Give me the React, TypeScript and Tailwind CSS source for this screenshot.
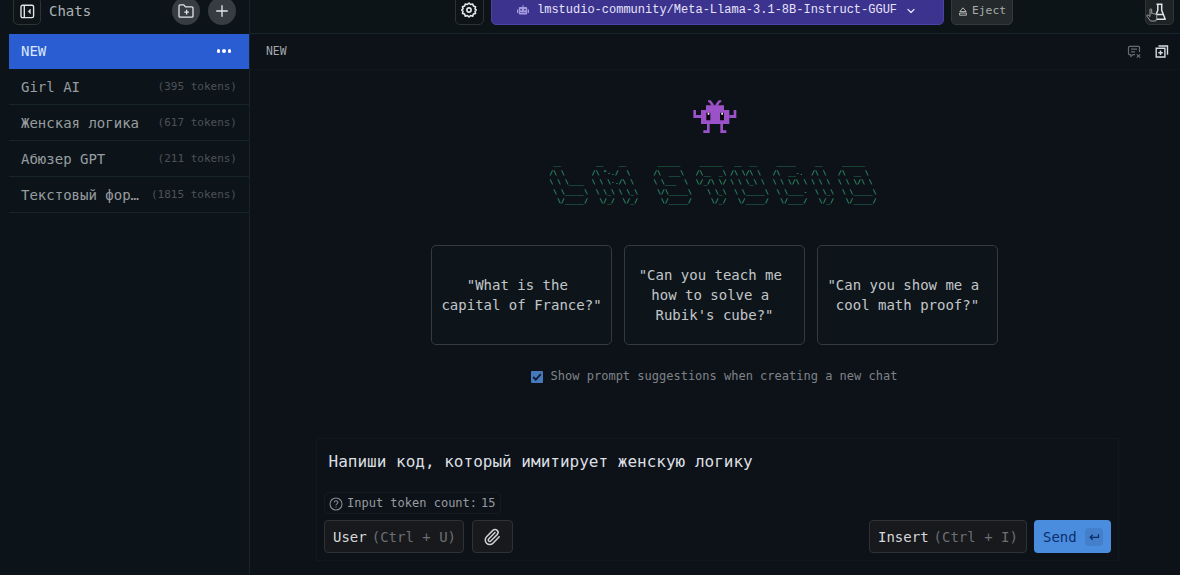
import { ReactNode } from 'react';
import { ChevronDown, Paperclip, Plus } from 'lucide-react';

interface Chat {
  title: string;
  tokens: number;
}

const chats: Chat[] = [
  { title: 'Girl AI', tokens: 395 },
  { title: 'Женская логика', tokens: 617 },
  { title: 'Абюзер GPT', tokens: 211 },
  { title: 'Текстовый фор…', tokens: 1815 },
];

// Wrapped lines keep their trailing space
const suggestions = [
  ['"What is the ', 'capital of France?"'],
  ['"Can you teach me ', 'how to solve a ', 'Rubik\'s cube?"'],
  ['"Can you show me a ', 'cool math proof?"'],
];

// Each letter is five rows, padded to its own column width
const letters: { width: number; rows: string[] }[] = [
  { width: 11, rows: [' __', '/\\ \\', '\\ \\ \\____', ' \\ \\_____\\', '  \\/_____/'] },
  { width: 16, rows: [' __    __', '/\\ "-./  \\', '\\ \\ \\-./\\ \\', ' \\ \\_\\ \\ \\_\\', '  \\/_/  \\/_/'] },
  { width: 11, rows: [' ______', '/\\  ___\\', '\\ \\___  \\', ' \\/\\_____\\', '  \\/_____/'] },
  { width: 9, rows: [' ______', '/\\__  _\\', '\\/_/\\ \\/', '   \\ \\_\\', '    \\/_/'] },
  { width: 11, rows: [' __  __', '/\\ \\/\\ \\', '\\ \\ \\_\\ \\', ' \\ \\_____\\', '  \\/_____/'] },
  { width: 10, rows: [' _____', '/\\  __-.', '\\ \\ \\/\\ \\', ' \\ \\____-', '  \\/____/'] },
  { width: 7, rows: [' __', '/\\ \\', '\\ \\ \\', ' \\ \\_\\', '  \\/_/'] },
  { width: 11, rows: [' ______', '/\\  __ \\', '\\ \\ \\/\\ \\', ' \\ \\_____\\', '  \\/_____/'] },
];

const logo = [0, 1, 2, 3, 4]
  .map((row) => letters.map((l) => l.rows[row].padEnd(l.width)).join(''))
  .join('\n');

function Robot() {
  return (
    <svg width="44" height="34" viewBox="0 0 132 102">
      <g fill="#9b51c7">
        <path d="M45 1h8l4 5 4 5 3 6h-9l-4-7-6-5zM85 1h-8l-4 5-4 5-3 6h9l4-7 6-5z" />
        <path d="M39 16h54v14h16v42H24V30h15z" />
        <path d="M1 30h8v15h15v9H1zM130 30h-8v15h-13v9h21z" />
        <path d="M42 72h8v27H31v-8h11zM82 72h8v19h10v8H82z" />
      </g>
      <path fill="#08070d" d="M40 38h12v23H40zM81 38h12v23H81z" />
      <path fill="#f4ecff" d="M44 38h5v6h-5zM85 38h5v6h-5z" />
    </svg>
  );
}

function PanelIcon() {
  return (
    <svg width="15" height="15" viewBox="0 0 15 15" fill="none" stroke="#dfe3e6" strokeWidth="1.4">
      <rect x="1" y="1.2" width="12.6" height="12.4" rx="1.6" />
      <path d="M4.300 1.2v12.4" />
      <path d="M10.400 5 8.2 7.4l2.200 2.4z" fill="#dfe3e6" strokeWidth="0.5" />
    </svg>
  );
}

function FolderPlusIcon() {
  return (
    <svg width="16" height="16" viewBox="0 0 16 16" fill="none" stroke="#e2e5e8" strokeWidth="1.3" strokeLinejoin="round">
      <path d="M1 3a1.2 1.2 0 0 1 1.2-1.2h3.6l1.7 2h6.3A1.2 1.2 0 0 1 15 5v8a1.2 1.2 0 0 1-1.2 1.2H2.2A1.2 1.2 0 0 1 1 13z" />
      <path d="M8.6 6.8v4.600M6.300 9.100h4.600" />
    </svg>
  );
}

function GearIcon() {
  return (
    <svg width="16" height="16" viewBox="0 0 16 16" fill="none" stroke="#e4e6e8" strokeWidth="1.6" strokeLinejoin="round">
      <path d="m8 1 1.600 1.500 2.100-.5.7 2.100 2.100.7-.5 2L15.300 8 14 9.400l.5 2-2.100.7-.7 2.100-2.100-.6L8 15l-1.600-1.400-2.100.6-.7-2.100-2.100-.7.5-2L.7 8 2 6.800l-.5-2 2.100-.7L4.300 2l2.100.5z" />
      <circle cx="8" cy="8" r="2.1" />
    </svg>
  );
}

function BotIcon() {
  return (
    <svg width="12" height="10" viewBox="0 0 12 10" fill="#a59ade">
      <path d="M5.500 0h1v2h2.700a1 1 0 0 1 1 1v5.500a1 1 0 0 1-1 1H2.800a1 1 0 0 1-1-1V3a1 1 0 0 1 1-1h2.700zM0 4.500h1.200v3.500H0zM10.800 4.500H12v3.500h-1.200z" />
      <path fill="#3b338e" d="M3.400 4h1.500v1.500H3.400zM7.100 4h1.500v1.500H7.100zM3.500 7h1v1h-1zM5.500 7h1v1h-1zM7.500 7h1v1h-1z" />
    </svg>
  );
}

function EjectIcon() {
  return (
    <svg width="8" height="9" viewBox="0 0 8 9" fill="none" stroke="#b3b6b6" strokeWidth="1" strokeLinejoin="round">
      <path d="M4 .8 7.200 4.600H.8z" />
      <path d="M.6 6h6.800v2.200H.6z" />
    </svg>
  );
}

function FlaskIcon() {
  return (
    <svg width="14" height="18" viewBox="0 0 14 18" fill="none" stroke="#e1e3e4" strokeWidth="1.5" strokeLinejoin="round">
      <path d="M3.500 1.200h6M4.800 1.200v6L1.200 16.300h11L8.700 7.200v-6" />
      <path d="M3.200 11.500h7.200" />
    </svg>
  );
}

// Hand cursor resting on the corner of the lab button
function HandCursor() {
  return (
    <svg className="absolute left-0 top-[16px]" width="13" height="14" viewBox="0 0 13 14" fill="#1c2022" stroke="#a9adaf" strokeWidth="0.9" strokeLinejoin="round">
      <path d="M4.500 13 1 8.300c-.7-1 .5-1.800 1.300-1.100L4 8.500V1.700c0-1.200 1.700-1.200 1.700 0v4c.5-.8 1.600-.5 1.700.3.5-.7 1.600-.4 1.700.5.600-.5 1.600-.2 1.600.8v3l-1 2.700z" />
    </svg>
  );
}

function ClearIcon() {
  return (
    <svg width="14" height="14" viewBox="0 0 14 14" fill="none" stroke="#666b72" strokeWidth="1.2" strokeLinejoin="round">
      <path d="M12.500 7V2.300a1 1 0 0 0-1-1h-9a1 1 0 0 0-1 1v6.400a1 1 0 0 0 1 1h1.300v2l2-2H8M4 4.200h6M4 6.800h4" />
      <path d="m9.800 9.300 3.400 3.400M13.200 9.300l-3.400 3.400" />
    </svg>
  );
}

function DuplicateIcon() {
  return (
    <svg width="14" height="13" viewBox="0 0 14 13" fill="none" stroke="#d8dadd" strokeWidth="1.4">
      <path d="M1.200 3.300h8.700v8.700H1.200zM3.500 1h9v8.700M5.500 5.400v4.500M3.300 7.700h4.500" />
    </svg>
  );
}

function GhostButton({ label, shortcut, className }: { label: string; shortcut: string; className: string }) {
  return (
    <button className={`flex h-[33px] items-center gap-[5px] rounded-[4px] border border-[#303134] bg-[#17191d] pl-2 text-sm text-[#d6d8da] ${className}`}>
      <span>{label}</span>
      <span className="text-[#6c6e72]">{shortcut}</span>
    </button>
  );
}

function RoundButton({ children }: { children: ReactNode }) {
  return <button className="flex size-7 items-center justify-center rounded-full bg-[#373c43]">{children}</button>;
}

function Sidebar() {
  return (
    <aside className="flex w-[250px] shrink-0 flex-col border-r border-[#17242b] bg-[#0c1419] pl-[9px]">
      <div className="flex h-[34px] shrink-0 items-end pb-[9px]">
        <button className="ml-1 flex h-7 w-7 items-center justify-center rounded-[5px] border border-[#2c3533] bg-[#0e1518]">
          <PanelIcon />
        </button>
        <span className="ml-2 flex-1 pb-[4px] text-sm text-[#aeb2b5]">Chats</span>
        <div className="mr-[13px] flex gap-2">
          <RoundButton>
            <FolderPlusIcon />
          </RoundButton>
          <RoundButton>
            <Plus className="size-[18px] text-[#e2e5e8]" strokeWidth={1.8} />
          </RoundButton>
        </div>
      </div>
      <div className="flex h-[35px] items-center justify-between bg-[#2a5dd2] pb-px pl-3 pr-[18px] text-sm text-[#dbe7ff]">
        <span>NEW</span>
        <span className="flex gap-[2px]">
          <i className="size-[3.500px] rounded-full bg-white" />
          <i className="size-[3.500px] rounded-full bg-white" />
          <i className="size-[3.500px] rounded-full bg-white" />
        </span>
      </div>
      {chats.map((chat) => (
        <div key={chat.title} className="flex h-9 items-center justify-between border-b border-[#17242a] pl-3 pr-3 text-sm text-[#989ca0]">
          <span>{chat.title}</span>
          <span className="mt-px text-[11px] text-[#4c5257]">({chat.tokens} tokens)</span>
        </div>
      ))}
    </aside>
  );
}

function TopBar() {
  return (
    <header className="flex h-[34px] shrink-0 items-end border-b border-[#15262c] bg-[#0c1418] pb-[8px] pl-[205px] pr-[6px]">
      <button className="flex h-[31px] w-[29px] items-center justify-center rounded-[5px] border border-[#2d3236] pr-px">
        <GearIcon />
      </button>
      <button className="ml-[7px] flex h-[34px] w-[453px] items-center rounded-[5px] border border-[#4b43a4] bg-[#3b338e] pl-[25px] pt-[3px] font-['Liberation_Mono',monospace] text-xs text-[#e8e4fb]">
        <BotIcon />
        <span className="ml-[8px]">lmstudio-community/Meta-Llama-3.1-8B-Instruct-GGUF</span>
        <ChevronDown className="ml-2 mt-0.5 size-3" strokeWidth={2.4} />
      </button>
      <button className="ml-[7px] flex h-[34px] w-[62px] items-center gap-[5px] rounded-[5px] border border-[#343a3a] bg-[#242a2b] pl-[7px] pt-[7px] text-[11.300px] text-[#a8abab]">
        <EjectIcon />
        Eject
      </button>
      <div className="relative ml-auto flex h-[34px] w-[29px] items-center justify-center rounded-[5px] border border-[#303638] bg-[#1e2426] pt-[7px]">
        <FlaskIcon />
        <HandCursor />
      </div>
    </header>
  );
}

function Composer() {
  return (
    <section className="ml-[66px] mr-[61px] flex h-[123px] flex-col border border-[#10181f] pl-[7px] pr-[7px]">
      <p className="mt-[11px] pl-[4.500px] text-[16.030px] leading-6 text-[#dcdfe2]">Напиши код, который имитирует женскую логику</p>
      <div className="mt-[18px] flex h-[22px] w-[177px] items-center rounded border border-[#131a20] pl-[4px] text-xs text-[#989ba0]">
        <svg className="mt-px" width="14" height="14" viewBox="0 0 14 14" fill="none" stroke="#85898e" strokeWidth="1.1">
          <circle cx="7" cy="7" r="6" />
          <path d="M5.200 5.500c.1-2.300 3.700-2.200 3.600 0C8.800 6.800 7 6.900 7 8.300M7 9.500v1" />
        </svg>
        <span className="ml-1">Input token count:</span>
        <span className="ml-1">15</span>
      </div>
      <div className="mt-[6px] flex items-center">
        <GhostButton label="User" shortcut="(Ctrl + U)" className="w-[140px]" />
        <button className="ml-2 flex h-[33px] w-[41px] items-center justify-center rounded-[4px] border border-[#303134] bg-[#17191d] pr-px">
          <Paperclip className="size-[18px] text-[#cfd1d3]" strokeWidth={2} />
        </button>
        <GhostButton label="Insert" shortcut="(Ctrl + I)" className="ml-auto w-[158px]" />
        <button className="ml-[7px] flex h-[33px] w-[77px] items-center justify-between rounded-[4px] bg-[#4a8ddf] pl-[9px] pr-2 text-sm text-[#0c2e6a]">
          Send
          <span className="flex h-[18px] w-[18px] items-center justify-center rounded-sm bg-[#437fca]">
            <svg width="11" height="8" viewBox="0 0 11 8" fill="none" stroke="#0c2e6a" strokeWidth="1.300">
              <path d="M9.500 1.300V4.300H1.200M3.700 1.800 1.200 4.300l2.500 2.500" />
            </svg>
          </span>
        </button>
      </div>
    </section>
  );
}

export default function App() {
  return (
    <div className="flex h-[575px] w-[1180px] overflow-hidden bg-[#0d1218] font-['DejaVu_Sans_Mono',monospace]">
      <Sidebar />
      <main className="flex min-w-0 flex-1 flex-col">
        <TopBar />
        <div className="flex h-9 shrink-0 items-center border-b border-[#10171d] pl-[16px] pr-[11px]">
          <span className="text-[11.400px] text-[#a5a8ac]">NEW</span>
          <div className="ml-auto flex items-center gap-[14px]">
            <ClearIcon />
            <DuplicateIcon />
          </div>
        </div>
        <div className="flex h-[368px] shrink-0 flex-col items-center pr-[2px]">
          <div className="ml-px mt-[30px]">
            <Robot />
          </div>
          <pre className="ml-[-1px] mt-[25px] w-[328px] font-['DejaVu_Sans_Mono',monospace] text-[6.400px] leading-[9.500px] text-[#3bc792]">{logo}</pre>
          <div className="mt-[38.500px] flex gap-3">
            {suggestions.map((lines) => (
              <button key={lines[0]} className="flex h-[100px] w-[181px] flex-col items-center justify-center rounded-[5px] border border-[#343a40] bg-[#0d151b] pl-px text-sm text-[#c3c6c9]">
                {lines.map((line) => (
                  <span key={line} className="whitespace-pre">{line}</span>
                ))}
              </button>
            ))}
          </div>
          <label className="mt-[23px] flex items-center gap-[8px] text-xs text-[#7f8388]">
            <span className="mt-px flex size-3 items-center justify-center rounded-[1px] bg-[#4579bb]">
              <svg width="10" height="8" viewBox="0 0 10 8" fill="none" stroke="#0c1c38" strokeWidth="1.800">
                <path d="m1.200 4 2.600 2.600L8.800 1.200" />
              </svg>
            </span>
            Show prompt suggestions when creating a new chat
          </label>
        </div>
        <Composer />
      </main>
    </div>
  );
}
